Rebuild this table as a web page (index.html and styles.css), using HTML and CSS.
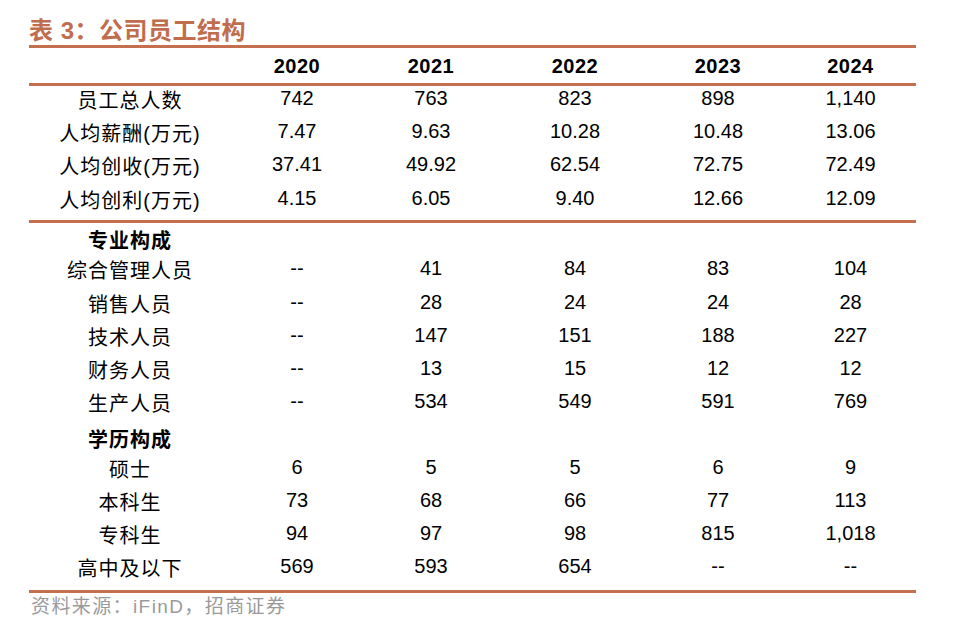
FILE: index.html
```html
<!DOCTYPE html>
<html lang="zh-CN">
<head>
<meta charset="utf-8">
<title>公司员工结构</title>
<link rel="stylesheet" href="styles.css">
</head>
<body>
<div class="page">
  <h1 class="title">表 3：公司员工结构</h1>
  <div class="table">
    <div class="row head">
      <div class="lbl"></div><div>2020</div><div>2021</div><div>2022</div><div>2023</div><div>2024</div>
    </div>
    <div class="section s1">
      <div class="row"><div class="lbl">员工总人数</div><div>742</div><div>763</div><div>823</div><div>898</div><div>1,140</div></div>
      <div class="row"><div class="lbl">人均薪酬(万元)</div><div>7.47</div><div>9.63</div><div>10.28</div><div>10.48</div><div>13.06</div></div>
      <div class="row"><div class="lbl">人均创收(万元)</div><div>37.41</div><div>49.92</div><div>62.54</div><div>72.75</div><div>72.49</div></div>
      <div class="row"><div class="lbl">人均创利(万元)</div><div>4.15</div><div>6.05</div><div>9.40</div><div>12.66</div><div>12.09</div></div>
    </div>
    <div class="section s2">
      <div class="row"><div class="lbl group">专业构成</div></div>
      <div class="row"><div class="lbl">综合管理人员</div><div>--</div><div>41</div><div>84</div><div>83</div><div>104</div></div>
      <div class="row"><div class="lbl">销售人员</div><div>--</div><div>28</div><div>24</div><div>24</div><div>28</div></div>
      <div class="row"><div class="lbl">技术人员</div><div>--</div><div>147</div><div>151</div><div>188</div><div>227</div></div>
      <div class="row"><div class="lbl">财务人员</div><div>--</div><div>13</div><div>15</div><div>12</div><div>12</div></div>
      <div class="row"><div class="lbl">生产人员</div><div>--</div><div>534</div><div>549</div><div>591</div><div>769</div></div>
      <div class="row"><div class="lbl group">学历构成</div></div>
      <div class="row"><div class="lbl">硕士</div><div>6</div><div>5</div><div>5</div><div>6</div><div>9</div></div>
      <div class="row"><div class="lbl">本科生</div><div>73</div><div>68</div><div>66</div><div>77</div><div>113</div></div>
      <div class="row"><div class="lbl">专科生</div><div>94</div><div>97</div><div>98</div><div>815</div><div>1,018</div></div>
      <div class="row"><div class="lbl">高中及以下</div><div>569</div><div>593</div><div>654</div><div>--</div><div>--</div></div>
    </div>
  </div>
  <div class="source">资料来源：iFinD，招商证券</div>
</div>
</body>
</html>
```

FILE: styles.css
```css
body {
  margin: 0;
  background: #ffffff;
  color: #000000;
  font-family: "Liberation Sans", "Noto Sans CJK SC", sans-serif;
}

.page {
  width: 887px;
  padding-left: 29px;
}

.title {
  margin: 0;
  padding-top: 16px;
  height: 29px;
  line-height: 29px;
  font-size: 24px;
  font-weight: bold;
  color: #c06d4e;
  letter-spacing: 0.5px;
  white-space: nowrap;
}

.table {
  border-top: 3px solid #c4704f;
  border-bottom: 3px solid #c4704f;
}

.row {
  display: grid;
  grid-template-columns: 202px 132px 136px 152px 134px 131px;
  align-items: start;
  font-size: 20px;
  line-height: 24px;
  text-align: center;
  white-space: nowrap;
}

.lbl {
  padding-top: 3px;
  letter-spacing: 1px;
}

.lbl.group {
  padding-top: 6px;
  font-weight: bold;
}

.head {
  padding-top: 1px;
  height: 34px;
  line-height: 34px;
  font-weight: bold;
  letter-spacing: 0.5px;
  border-bottom: 3px solid #c4704f;
}

.s1 {
  padding-bottom: 1px;
  border-bottom: 3px solid #c4704f;
}

.s1 .row {
  height: 33.2px;
}

.s2 {
  padding-top: 0.7px;
  padding-bottom: 2.6px;
}

.s2 .row {
  height: 33.06px;
}

.source {
  margin-top: 3px;
  padding-left: 2px;
  font-size: 19px;
  line-height: 22px;
  color: #9a9a9a;
  letter-spacing: 1.4px;
  white-space: nowrap;
}
```
